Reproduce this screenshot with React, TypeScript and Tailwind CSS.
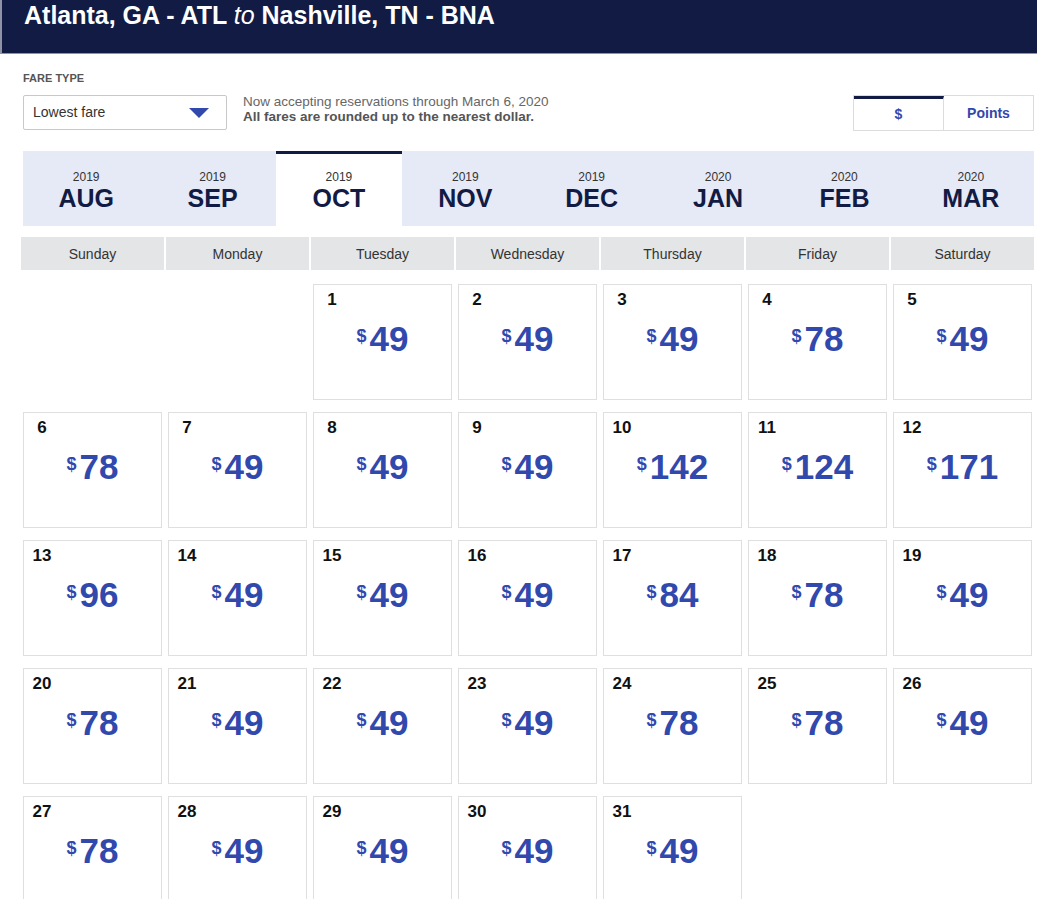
import React from "react";

const fares: Record<number, number> = {
  1: 49, 2: 49, 3: 49, 4: 78, 5: 49,
  6: 78, 7: 49, 8: 49, 9: 49, 10: 142, 11: 124, 12: 171,
  13: 96, 14: 49, 15: 49, 16: 49, 17: 84, 18: 78, 19: 49,
  20: 78, 21: 49, 22: 49, 23: 49, 24: 78, 25: 78, 26: 49,
  27: 78, 28: 49, 29: 49, 30: 49, 31: 49,
};

const months = [
  { y: "2019", m: "AUG" },
  { y: "2019", m: "SEP" },
  { y: "2019", m: "OCT", active: true },
  { y: "2019", m: "NOV" },
  { y: "2019", m: "DEC" },
  { y: "2020", m: "JAN" },
  { y: "2020", m: "FEB" },
  { y: "2020", m: "MAR" },
];

const days = ["Sunday", "Monday", "Tuesday", "Wednesday", "Thursday", "Friday", "Saturday"];

export default function App() {
  const cells: (number | null)[] = [null, null];
  for (let d = 1; d <= 31; d++) cells.push(d);
  while (cells.length % 7 !== 0) cells.push(null);

  return (
    <div className="w-[1037px] h-[899px] overflow-hidden bg-white font-['Liberation_Sans',Arial,sans-serif]">
      <div className="h-[54px] bg-[#111b44] border-l-2 border-b border-[#8e93a6] pl-[22px]">
        <h1 className="text-[25px] leading-[30px] font-bold text-white">
          Atlanta, GA - ATL <span className="font-normal italic">to</span> Nashville, TN - BNA
        </h1>
      </div>

      <div className="h-[78px] flex items-start pl-[23px] pr-[3px] pt-[18px]">
        <div className="flex flex-col">
          <div className="text-[11px] leading-[13px] font-bold text-[#555] uppercase mb-[10px]">Fare type</div>
          <div className="w-[204px] h-[35px] border border-[#c8c8c8] rounded-[2px] flex items-center justify-between pl-[9px] pr-[17px]">
            <span className="text-[14px] text-[#333]">Lowest fare</span>
            <svg width="20" height="10" viewBox="0 0 20 10">
              <polygon points="0,0 20,0 10,10" fill="#3148ad" />
            </svg>
          </div>
        </div>
        <div className="ml-[16px] mt-[22px] text-[13.5px] leading-[15px]">
          <div className="text-[#666]">Now accepting reservations through March 6, 2020</div>
          <div className="font-bold text-[#555]">All fares are rounded up to the nearest dollar.</div>
        </div>
        <div className="ml-auto mt-[23px] flex h-[36px] border border-[#dcdcdc]">
          <div className="w-[90px] border-t-[3px] border-[#111b44] flex items-center justify-center text-[14px] font-bold text-[#3148ad] border-r border-r-[#dcdcdc]">
            $
          </div>
          <div className="w-[89px] flex items-center justify-center text-[14px] font-bold text-[#3148ad]">
            Points
          </div>
        </div>
      </div>

      <div className="ml-[23px] mr-[3px] mt-[19px] grid grid-cols-8 bg-[#e6eaf7] h-[75px]">
        {months.map((mo) => (
          <div
            key={mo.m}
            className={
              mo.active
                ? "bg-white border-t-[3px] border-[#111b44] flex flex-col items-center pt-[17px]"
                : "flex flex-col items-center pt-[20px]"
            }
          >
            <div className="text-[12px] leading-[13px] text-[#333]">{mo.y}</div>
            <div className="text-[25px] leading-[28px] font-bold text-[#111b44]">{mo.m}</div>
          </div>
        ))}
      </div>

      <div className="ml-[21px] mr-[3px] mt-[11px] grid grid-cols-7 gap-[2px]">
        {days.map((d) => (
          <div key={d} className="h-[33px] pt-[1px] bg-[#e4e5e7] flex items-center justify-center text-[14px] text-[#333]">
            {d}
          </div>
        ))}
      </div>

      <div className="ml-[21px] mr-[3px] mt-[14px] grid grid-cols-7 gap-x-[2px] gap-y-[12px]">
        {cells.map((d, i) => (
          <div key={i} className="px-[2px]">
            {d !== null ? (
              <div className="h-[116px] border border-[#dfdfdf] flex flex-col">
                <div className="ml-[8px] mt-[5px] w-[20px] text-center text-[17px] leading-[20px] font-bold text-[#111]">
                  {d}
                </div>
                <div className="mt-[9px] flex justify-center items-start text-[#3148ad] font-bold">
                  <span className="text-[18px] leading-none mt-[8px] mr-[3px]">$</span>
                  <span className="text-[35px] leading-[40px]">{fares[d]}</span>
                </div>
              </div>
            ) : (
              <div className="h-[116px]" />
            )}
          </div>
        ))}
      </div>
    </div>
  );
}
